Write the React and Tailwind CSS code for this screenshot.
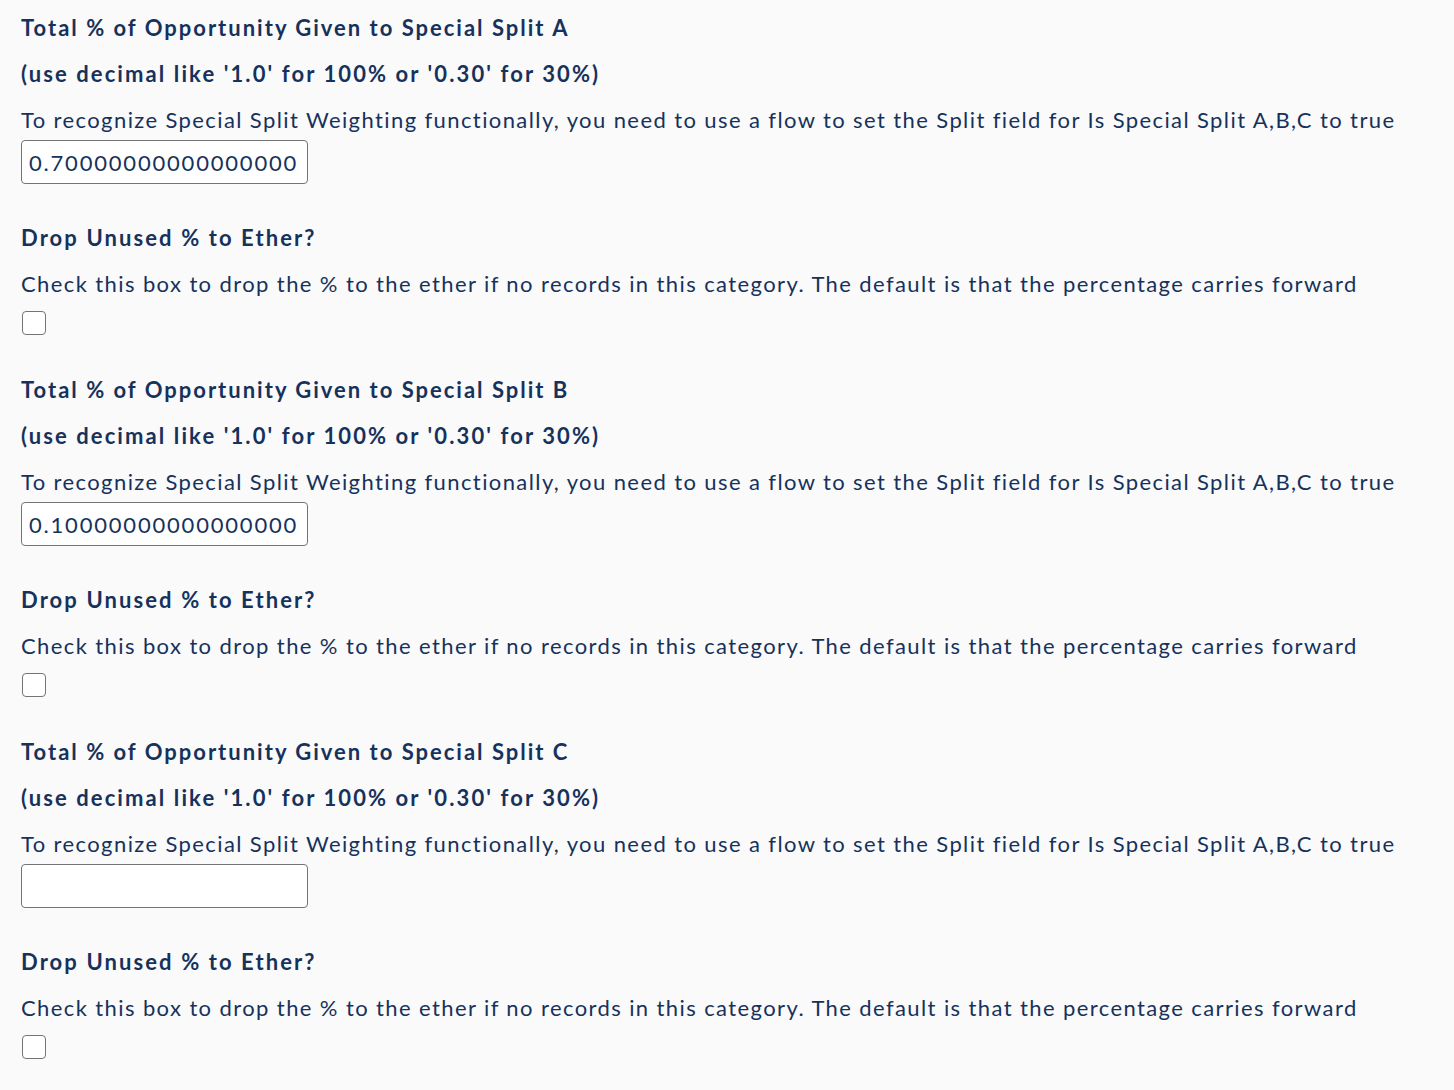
import React from 'react';

const splits = [
  { id: 'A', value: '0.70000000000000000' },
  { id: 'B', value: '0.10000000000000000' },
  { id: 'C', value: '' },
];

function SplitSection({ split }) {
  return (
    <div className="pb-[40px]">
      <p className="font-bold leading-[30px] tracking-[2px]">Total % of Opportunity Given to Special Split {split.id}</p>
      <p className="font-bold leading-[30px] tracking-[2.1px] mt-4">(use decimal like '1.0' for 100% or '0.30' for 30%)</p>
      <p className="leading-[30px] tracking-[1.4px] mt-4">
        To recognize Special Split Weighting functionally, you need to use a flow to set the Split field for Is Special Split A,B,C to true
      </p>
      <input
        type="text"
        defaultValue={split.value}
        className="mt-[5px] block w-[287px] h-[44px] bg-white border border-[#747474] rounded-[4px] px-[7px] tracking-[1.8px] text-[#16325c] outline-none"
      />
      <p className="font-bold leading-[30px] tracking-[2.1px] mt-[39px]">Drop Unused % to Ether?</p>
      <p className="leading-[30px] tracking-[1.4px] mt-4">
        Check this box to drop the % to the ether if no records in this category. The default is that the percentage carries forward
      </p>
      <input
        type="checkbox"
        className="mt-3 block w-6 h-6 appearance-none bg-white border border-[#747474] rounded-[4px] ml-px"
      />
    </div>
  );
}

export default function App() {
  return (
    <div
      className="min-h-screen bg-[#fafafa] text-[#16325c] text-[22px] pl-[21px] pt-[13px]"
      style={{ fontFamily: 'Lato, "Noto Sans", sans-serif' }}
    >
      {splits.map((split) => (
        <SplitSection key={split.id} split={split} />
      ))}
    </div>
  );
}
